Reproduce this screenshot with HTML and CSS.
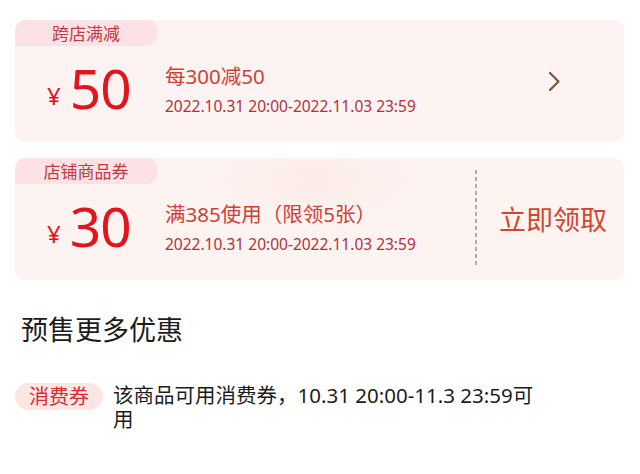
FILE: index.html
```html
<!DOCTYPE html>
<html lang="zh-CN">
<head>
<meta charset="utf-8">
<link rel="stylesheet" href="styles.css">
</head>
<body>
<div class="page">
  <div class="coupon">
    <div class="tag">跨店满减</div>
    <div class="body">
      <div class="price"><span class="yen">¥</span><span class="amt">50</span></div>
      <div class="info">
        <div class="title">每300减50</div>
        <div class="date">2022.10.31 20:00-2022.11.03 23:59</div>
      </div>
      <div class="arrow">
        <svg width="13" height="21" viewBox="0 0 13 21"><path d="M2 2 L10.5 10.5 L2 19" fill="none" stroke="#7a5432" stroke-width="2.2" stroke-linecap="round" stroke-linejoin="round"/></svg>
      </div>
    </div>
  </div>

  <div class="coupon second">
    <div class="tag">店铺商品券</div>
    <div class="body">
      <div class="price"><span class="yen">¥</span><span class="amt">30</span></div>
      <div class="info">
        <div class="title">满385使用（限领5张）</div>
        <div class="date">2022.10.31 20:00-2022.11.03 23:59</div>
      </div>
      <div class="divider"></div>
      <div class="get">立即领取</div>
    </div>
  </div>

  <h2 class="section">预售更多优惠</h2>

  <div class="promo">
    <span class="pill">消费券</span>
    <p class="desc">该商品可用消费券，10.31 20:00-11.3 23:59可用</p>
  </div>
</div>
</body>
</html>
```

FILE: styles.css
```css
* { box-sizing: border-box; }
html, body { margin: 0; padding: 0; background: #fff; }
body {
  font-family: "Noto Sans", "Noto Sans CJK SC", sans-serif;
  width: 640px;
  height: 474px;
  overflow: hidden;
}
.page {
  padding: 20px 16px 0 15px;
}
.coupon {
  background: #fdf3f2;
  border-radius: 10px;
  height: 122px;
  display: flex;
  flex-direction: column;
  overflow: hidden;
}
.coupon.second {
  margin-top: 16px;
  background:
    radial-gradient(ellipse 110px 36px at 300px 22px, rgba(250, 224, 218, 0.4), rgba(250, 224, 218, 0) 100%),
    #fdf3f1;
}
.tag {
  width: 142px;
  height: 26px;
  background: #fce2e4;
  color: #c23a40;
  font-family: "Noto Sans CJK SC", sans-serif;
  font-size: 17px;
  line-height: 26px;
  text-align: center;
  border-radius: 10px 9px 10px 0;
}
.body {
  flex: 1;
  display: flex;
  align-items: flex-start;
}
.price {
  width: 150px;
  padding-left: 32px;
  margin-top: 12px;
  color: #e2151c;
  line-height: 60px;
  height: 60px;
  white-space: nowrap;
}
.yen {
  font-size: 24px;
  line-height: 1;
  margin-right: 9px;
  vertical-align: 4px;
}
.amt {
  font-size: 55px;
  line-height: 60px;
  letter-spacing: -1px;
}
.info {
  flex: 1;
  display: flex;
  flex-direction: column;
  gap: 6px;
  margin-top: 17px;
}
.title {
  font-size: 20.5px;
  line-height: 26px;
  color: #cf4036;
}
.date {
  font-size: 15.5px;
  line-height: 22px;
  color: #b1313b;
}
.arrow {
  width: 76px;
  margin-top: 25px;
}
.arrow svg { display: block; }
.divider {
  width: 2px;
  height: 97px;
  margin-top: -14px;
  margin-right: 22px;
  background: repeating-linear-gradient(to bottom, #b5a9a9 0 4px, transparent 4px 7px);
}
.get {
  width: 125px;
  margin-top: 18px;
  font-size: 27px;
  line-height: 36px;
  color: #d2462f;
}
.section {
  margin: 32px 0 0 6px;
  font-size: 27px;
  font-weight: normal;
  color: #1c1c1c;
  line-height: 36px;
}
.promo {
  margin-top: 35px;
  display: flex;
  align-items: flex-start;
}
.pill {
  flex: none;
  width: 88px;
  height: 27px;
  border-radius: 14px;
  background: #fde5e2;
  color: #d42a30;
  font-size: 20px;
  line-height: 27px;
  text-align: center;
}
.desc {
  margin: 0 0 0 10px;
  width: 435px;
  font-size: 20.5px;
  line-height: 24px;
  color: #1c1c1c;
}
```
